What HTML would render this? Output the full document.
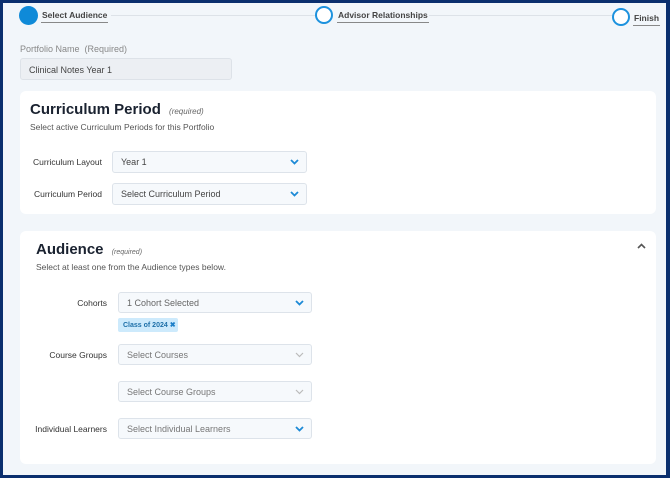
<!DOCTYPE html>
<html><head><style>
*{box-sizing:border-box;margin:0;padding:0}
body{width:670px;height:478px;background:#0b2f6e;font-family:"Liberation Sans",sans-serif;position:relative;overflow:hidden}
.page{position:absolute;left:3px;top:3px;width:663px;height:472px;background:#f2f6fa}
.abs{position:absolute;white-space:nowrap}
.step{font-size:8.5px;font-weight:bold;color:#444;border-bottom:1.5px solid #888;padding:0 1px 2px 1px;background:#f2f6fa;z-index:2}
.line{position:absolute;height:1px;background:#dde2e8}
.card{position:absolute;background:#fff;border-radius:6px;left:17px;width:636px}
.sel{position:absolute;background:#f6f9fc;border:1px solid #dde3ea;border-radius:3px;font-size:9px;color:#444;padding-left:8px;display:flex;align-items:center;white-space:nowrap}
.sel svg{position:absolute;right:7px;top:50%;margin-top:-3px}
.lbl{position:absolute;font-size:8.5px;color:#333;text-align:right;white-space:nowrap}
</style></head><body><div class="page">
<div class="line" style="left:108px;top:12px;width:204px"></div>
<div class="line" style="left:420px;top:12px;width:189px"></div>
<div class="abs" style="left:16px;top:3px;width:19px;height:19px;border-radius:50%;background:#0f8ad8"></div>
<div class="abs step" style="left:38px;top:7px">Select Audience</div>
<div class="abs" style="left:312px;top:3px;width:18px;height:18px;border-radius:50%;border:2px solid #1d92de;background:#fff"></div>
<div class="abs step" style="left:334px;top:7px">Advisor Relationships</div>
<div class="abs" style="left:609px;top:5px;width:18px;height:18px;border-radius:50%;border:2px solid #1d92de;background:#fff"></div>
<div class="abs step" style="left:630px;top:10px">Finish</div>

<div class="abs" style="left:17px;top:41px;font-size:9px;color:#888">Portfolio Name&nbsp; (Required)</div>
<div class="abs" style="left:17px;top:55px;width:212px;height:22px;background:#eceff3;border:1px solid #dde2e8;border-radius:3px;font-size:9px;color:#444;padding:6px 0 0 8px">Clinical Notes Year 1</div>

<div class="card" style="top:88px;height:123px">
<div class="abs" style="left:10px;top:10px;font-size:15px;font-weight:bold;color:#1a2230">Curriculum Period <span style="font-size:8px;font-weight:normal;font-style:italic;color:#666;margin-left:4px">(required)</span></div>
<div class="abs" style="left:10px;top:31px;font-size:8.5px;color:#555">Select active Curriculum Periods for this Portfolio</div>
<div class="lbl" style="left:0px;top:66px;width:82px">Curriculum Layout</div>
<div class="sel" style="left:92px;top:60px;width:195px;height:22px">Year 1<svg width="9" height="6"><path d="M1 1l3.5 3.5L8 1" stroke="#1d8ad6" stroke-width="1.8" fill="none"/></svg></div>
<div class="lbl" style="left:0px;top:98px;width:82px">Curriculum Period</div>
<div class="sel" style="left:92px;top:92px;width:195px;height:22px">Select Curriculum Period<svg width="9" height="6"><path d="M1 1l3.5 3.5L8 1" stroke="#1d8ad6" stroke-width="1.8" fill="none"/></svg></div>
</div>

<div class="card" style="top:228px;height:233px">
<div class="abs" style="left:16px;top:10px;font-size:15px;font-weight:bold;color:#1a2230">Audience <span style="font-size:7px;font-weight:normal;font-style:italic;color:#666;margin-left:4px">(required)</span></div>
<svg class="abs" style="left:617px;top:12px" width="9" height="6"><path d="M1 5l3.5-3.5L8 5" stroke="#555" stroke-width="1.6" fill="none"/></svg>
<div class="abs" style="left:16px;top:31px;font-size:8.5px;color:#555">Select at least one from the Audience types below.</div>
<div class="lbl" style="left:0px;top:67px;width:87px">Cohorts</div>
<div class="sel" style="left:98px;top:61px;width:194px;height:21px;color:#666">1 Cohort Selected<svg width="9" height="6"><path d="M1 1l3.5 3.5L8 1" stroke="#1d8ad6" stroke-width="1.8" fill="none"/></svg></div>
<div class="abs" style="left:98px;top:87px;width:60px;height:14px;background:#cdeafc;border-radius:2px;font-size:7px;font-weight:bold;color:#1d6fa8;padding:3px 0 0 5px">Class of 2024 <span style="color:#1d7fc8">✖</span></div>
<div class="lbl" style="left:0px;top:119px;width:87px">Course Groups</div>
<div class="sel" style="left:98px;top:113px;width:194px;height:21px;color:#777">Select Courses<svg width="9" height="6"><path d="M1 1l3.5 3.5L8 1" stroke="#bbb" stroke-width="1.2" fill="none"/></svg></div>
<div class="sel" style="left:98px;top:150px;width:194px;height:21px;color:#777">Select Course Groups<svg width="9" height="6"><path d="M1 1l3.5 3.5L8 1" stroke="#bbb" stroke-width="1.2" fill="none"/></svg></div>
<div class="lbl" style="left:0px;top:193px;width:87px">Individual Learners</div>
<div class="sel" style="left:98px;top:187px;width:194px;height:21px;color:#777">Select Individual Learners<svg width="9" height="6"><path d="M1 1l3.5 3.5L8 1" stroke="#1d8ad6" stroke-width="1.8" fill="none"/></svg></div>
</div>
</div></body></html>
